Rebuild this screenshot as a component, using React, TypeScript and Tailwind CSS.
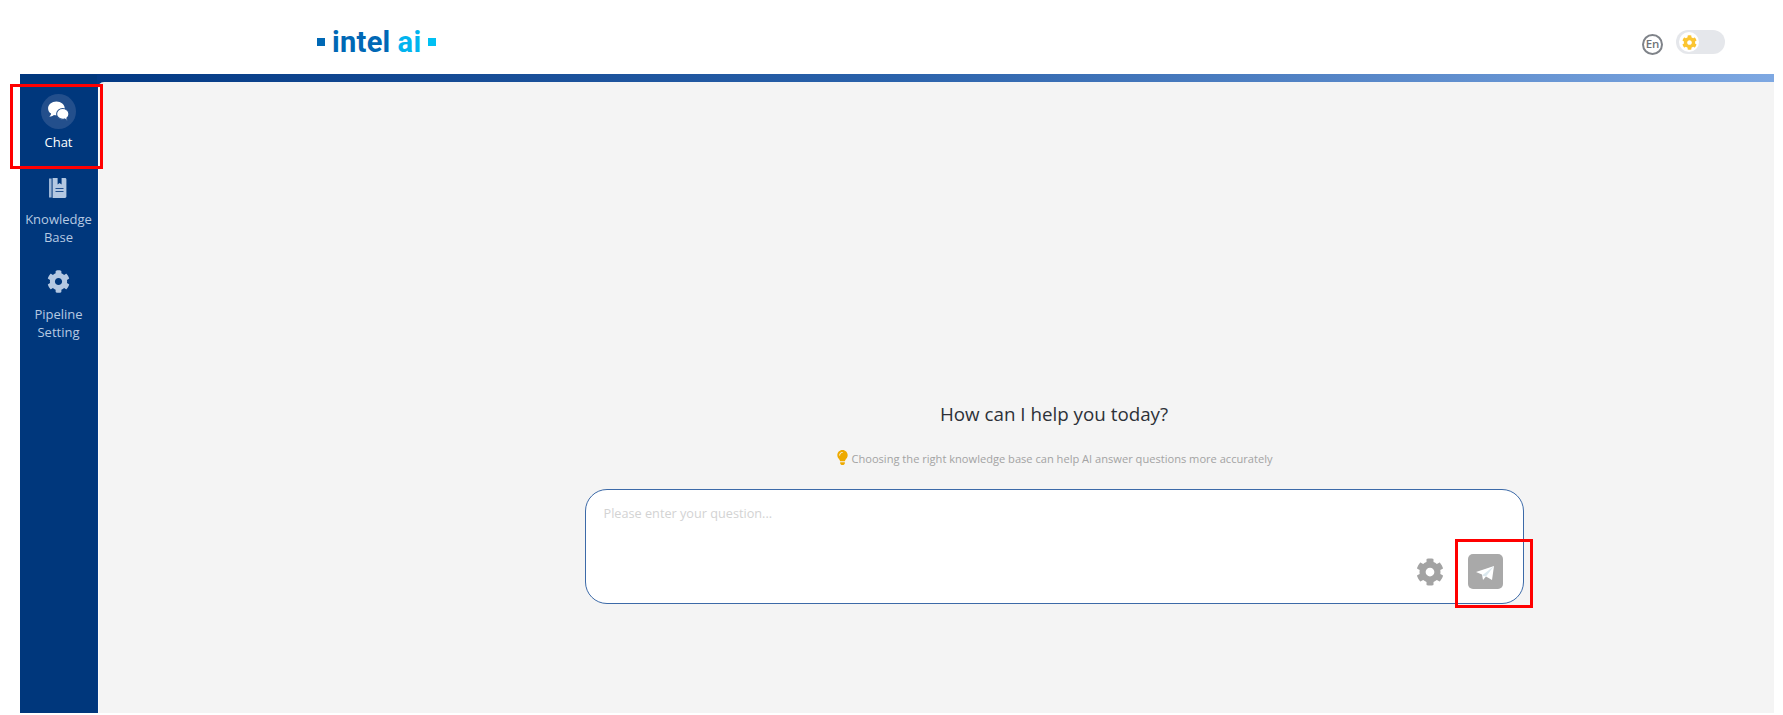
import { FaCog, FaLightbulb } from "react-icons/fa";

const uiFont = "font-['Open_Sans','Noto_Sans',sans-serif]";

function ChatIcon() {
  return (
    <svg viewBox="0 0 24 24" className="w-[25px] h-[25px]" fill="#ffffff">
      <path d="M10 2.5c-4.4 0-8 2.9-8 6.5 0 2 1.1 3.8 2.9 5-.2 1.2-.9 2.2-1.7 3 1.6-.2 3.2-.8 4.4-1.7.7.2 1.5.2 2.4.2 4.4 0 8-2.9 8-6.5s-3.6-6.5-8-6.5z" />
      <path
        d="M16 9.2c-3.2 0-5.8 2.3-5.8 5.1s2.6 5.1 5.8 5.1c.7 0 1.3-.1 1.9-.3.8.8 2 1.4 3.3 1.6-.6-.7-1-1.5-1.2-2.4 1.2-.9 2-2.4 2-4 0-2.8-2.8-5.1-6-5.1z"
        stroke="#234f8c"
        strokeWidth="1"
      />
    </svg>
  );
}

function BookIcon() {
  return (
    <svg viewBox="0 0 20 22" className="w-[20px] h-[22px]">
      <path d="M1 1.5h2.6v19H1z" fill="#9db6d6" />
      <path d="M4.6 1h5v6.5l2-1.6 2 1.6V1h3.4c.8 0 1.4.6 1.4 1.4v17.2c0 .8-.6 1.4-1.4 1.4H4.6z" fill="#b4c8e2" />
      <path d="M7.5 11.5h8M7.5 14.5h8" stroke="#1f4f8f" strokeWidth="1.2" />
    </svg>
  );
}

function NavItem({ label, icon, active, labelGap }: { label: string[]; icon: React.ReactNode; active?: boolean; labelGap: string }) {
  return (
    <div className={`flex flex-col items-center ${active ? "text-white" : "text-[#b6c9e2]"}`}>
      {icon}
      <div className={`${labelGap} text-[13px] leading-[18px] text-center`}>
        {label.map((l) => (
          <div key={l}>{l}</div>
        ))}
      </div>
    </div>
  );
}

export default function App() {
  return (
    <div className={`relative w-[1783px] h-[715px] bg-white overflow-hidden flex flex-col ${uiFont}`}>
      {/* header */}
      <header className="h-[74px] shrink-0 flex items-center justify-between pl-[317px] pr-[58px] pt-[10px]">
        <div className="flex items-center gap-[7px] font-['Roboto',sans-serif] font-bold text-[29px] leading-none tracking-[0.3px]">
          <span className="w-[8px] h-[8px] bg-[#0068b5]" />
          <span className="text-[#0068b5]">intel</span>
          <span className="text-[#00b4ef]">ai</span>
          <span className="w-[8px] h-[8px] bg-[#00c0f3]" />
        </div>
        <div className="flex items-center gap-[13px]">
          <div className="w-[21px] h-[21px] mt-[4px] rounded-full border-2 border-[#7f8389] flex items-center justify-center text-[11.5px] font-semibold text-[#6f7378]">
            En
          </div>
          <div className="w-[49px] h-[24px] rounded-full bg-[#e5e7eb] py-[2px] pl-[3px]">
            <div className="w-[20px] h-[20px] rounded-full bg-white flex items-center justify-center">
              <FaCog className="w-[15px] h-[15px] text-[#fbc531]" />
            </div>
          </div>
        </div>
      </header>

      {/* body */}
      <div className="ml-[20px] mr-[9px] flex-1 mb-[2px] flex flex-col bg-gradient-to-r from-[#003580] via-[#2a62ab] to-[#7ea8e2] pt-[1px]">
        <div className="flex-1 flex pt-[7px]">
          <aside className="w-[77px] -mt-[7px] pt-[19px] bg-[#00377c] flex flex-col items-center">
            <NavItem
              active
              labelGap="mt-[4px]"
              label={["Chat"]}
              icon={
                <div className="w-[35px] h-[35px] rounded-full bg-[#234f8c] flex items-center justify-center">
                  <ChatIcon />
                </div>
              }
            />
            <div className="h-[26px] shrink-0" />
            <NavItem labelGap="mt-[11px]" label={["Knowledge", "Base"]} icon={<BookIcon />} />
            <div className="h-[24px] shrink-0" />
            <NavItem labelGap="mt-[12px]" label={["Pipeline", "Setting"]} icon={<FaCog className="w-[23px] h-[23px] text-[#b4c8e2]" />} />
          </aside>
          <main className="flex-1 ml-[1px] border-l border-[#fafafa] bg-[#f4f4f4] rounded-tl-[6px] flex flex-col items-center pt-[318px] pl-[235px]">
            <div className="w-[939px] flex flex-col items-center">
              <h1 className="text-[18.8px] leading-[28px] text-[#2d3138]">How can I help you today?</h1>
              <div className="mt-[22px] flex items-center text-[11.1px] leading-[18px] text-[#a3a3a3]">
                <FaLightbulb className="w-[15px] h-[15px] text-[#eeaa00] -mt-[4px]" />
                <span className="ml-[1px]">Choosing the right knowledge base can help AI answer questions more accurately</span>
              </div>
              <div className="mt-[21px] w-full h-[115px] bg-white rounded-[22px] border border-[#3c6aa8] relative pl-[18px] pt-[13px]">
                <div className="text-[12.7px] leading-[20px] text-[#d3d3d3]">Please enter your question...</div>
                <div className="absolute right-[20px] bottom-[14px] flex items-center gap-[24px]">
                  <FaCog className="w-[28px] h-[28px] text-[#a3a3a3]" />
                  <div className="w-[35px] h-[35px] rounded-[5px] bg-[#a9a9a9] flex items-center justify-center">
                    <svg viewBox="0 0 20 20" className="w-[20px] h-[20px] mt-[2px]">
                      <path d="M1 9 19 3l-2 14-6-3.5-3 3.5-1-5.5z" fill="#ffffff" />
                      <path d="M7 12.5 19 3l-8 10.5z" fill="#dbe8ee" />
                    </svg>
                  </div>
                </div>
              </div>
            </div>
          </main>
        </div>
      </div>

      {/* annotation boxes */}
      <div className="absolute left-[10px] top-[84px] w-[93px] h-[85px] border-[3px] border-[#ff0000]" />
      <div className="absolute left-[1455px] top-[539px] w-[78px] h-[69px] border-[3px] border-[#ff0000]" />
    </div>
  );
}
